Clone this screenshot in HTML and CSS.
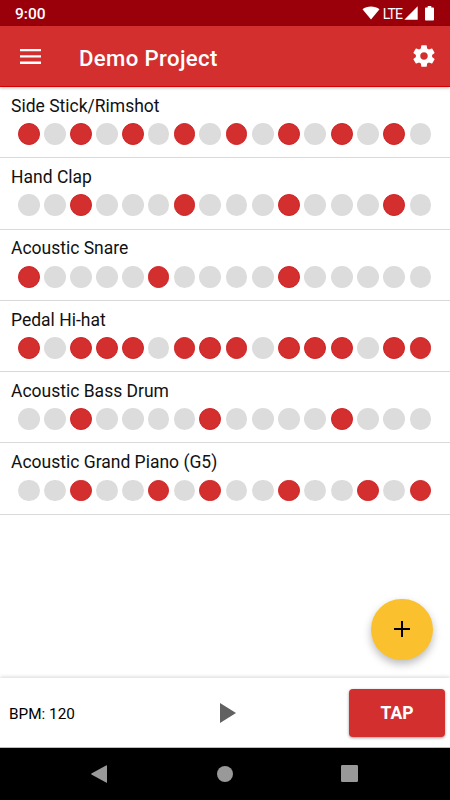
FILE: index.html
```html
<!DOCTYPE html>
<html lang="en">
<head>
<meta charset="utf-8">
<title>Demo Project</title>
<link rel="stylesheet" href="styles.css">
</head>
<body>
<div class="screen">
  <div class="status">
    <span class="time">9:00</span>
    <svg class="wifi" width="18" height="14" viewBox="0 0 18 14"><path d="M9 13.5 0.5 3.3C5 -0.3 13 -0.3 17.5 3.3Z"/></svg>
    <span class="lte">LTE</span>
    <svg class="signal" width="14" height="14" viewBox="0 0 14 14"><path d="M0.3 13.7H13.7V0.3Z"/></svg>
    <svg class="battery" width="9" height="15" viewBox="0 0 9 15"><path d="M2.7 0H6.3V1.6H8.2Q9 1.6 9 2.4V13.7Q9 14.5 8.2 14.5H.8Q0 14.5 0 13.7V2.4Q0 1.6 .8 1.6H2.7Z"/></svg>
  </div>
  <header class="bar">
    <svg class="menu" width="21" height="15" viewBox="0 0 21 15"><path d="M0 0H21V2.3H0ZM0 6.3H21V8.6H0ZM0 12.6H21V14.9H0Z"/></svg>
    <h1>Demo Project</h1>
    <svg class="gear" width="26" height="26" viewBox="0 0 24 24"><path d="M19.43 12.98c.04-.32.07-.64.07-.98s-.03-.66-.07-.98l2.11-1.65c.19-.15.24-.42.12-.64l-2-3.46c-.12-.22-.39-.3-.61-.22l-2.49 1c-.52-.4-1.08-.73-1.69-.98l-.38-2.65C14.46 2.18 14.25 2 14 2h-4c-.25 0-.46.18-.49.42l-.38 2.65c-.61.25-1.17.59-1.69.98l-2.49-1c-.23-.09-.49 0-.61.22l-2 3.46c-.13.22-.07.49.12.64l2.11 1.65c-.04.32-.07.65-.07.98s.03.66.07.98l-2.11 1.65c-.19.15-.24.42-.12.64l2 3.46c.12.22.39.3.61.22l2.49-1c.52.4 1.08.73 1.69.98l.38 2.65c.03.24.24.42.49.42h4c.25 0 .46-.18.49-.42l.38-2.65c.61-.25 1.17-.59 1.69-.98l2.49 1c.23.09.49 0 .61-.22l2-3.46c.12-.22.07-.49-.12-.64zM12 15.5c-1.93 0-3.5-1.57-3.5-3.5s1.57-3.5 3.5-3.5 3.5 1.57 3.5 3.5-1.57 3.5-3.5 3.5z"/></svg>
  </header>
  <main class="tracks">
    <section class="track"><h2>Side Stick/Rimshot</h2><div class="steps"><i class="on"></i><i></i><i class="on"></i><i></i><i class="on"></i><i></i><i class="on"></i><i></i><i class="on"></i><i></i><i class="on"></i><i></i><i class="on"></i><i></i><i class="on"></i><i></i></div></section>
    <section class="track"><h2>Hand Clap</h2><div class="steps"><i></i><i></i><i class="on"></i><i></i><i></i><i></i><i class="on"></i><i></i><i></i><i></i><i class="on"></i><i></i><i></i><i></i><i class="on"></i><i></i></div></section>
    <section class="track"><h2>Acoustic Snare</h2><div class="steps"><i class="on"></i><i></i><i></i><i></i><i></i><i class="on"></i><i></i><i></i><i></i><i></i><i class="on"></i><i></i><i></i><i></i><i></i><i></i></div></section>
    <section class="track"><h2>Pedal Hi-hat</h2><div class="steps"><i class="on"></i><i></i><i class="on"></i><i class="on"></i><i class="on"></i><i></i><i class="on"></i><i class="on"></i><i class="on"></i><i></i><i class="on"></i><i class="on"></i><i class="on"></i><i></i><i class="on"></i><i class="on"></i></div></section>
    <section class="track"><h2>Acoustic Bass Drum</h2><div class="steps"><i></i><i></i><i class="on"></i><i></i><i></i><i></i><i></i><i class="on"></i><i></i><i></i><i></i><i></i><i class="on"></i><i></i><i></i><i></i></div></section>
    <section class="track"><h2>Acoustic Grand Piano (G5)</h2><div class="steps"><i></i><i></i><i class="on"></i><i></i><i></i><i class="on"></i><i></i><i class="on"></i><i></i><i></i><i class="on"></i><i></i><i></i><i class="on"></i><i></i><i class="on"></i></div></section>
    <button class="fab" aria-label="Add track"><svg width="16" height="16" viewBox="0 0 16 16"><path d="M7 0H9V7H16V9H9V16H7V9H0V7H7Z"/></svg></button>
  </main>
  <footer class="transport">
    <span class="bpm">BPM: 120</span>
    <svg class="play" width="16" height="20" viewBox="0 0 16 20"><path d="M0 0 16 10 0 20Z"/></svg>
    <button class="tap">TAP</button>
  </footer>
  <nav class="nav">
    <svg width="16" height="18" viewBox="0 0 16 18"><path d="M16 .5V17.5Q16 18 15.5 17.8L.4 9.5Q0 9 .4 8.5L15.5 .2Q16 0 16 .5Z"/></svg>
    <svg class="home" width="16" height="16" viewBox="0 0 16 16"><circle cx="8" cy="8" r="8"/></svg>
    <svg width="17" height="17" viewBox="0 0 17 17"><rect width="17" height="17" rx="1.2"/></svg>
  </nav>
</div>
</body>
</html>
```
FILE: styles.css
```css
* { box-sizing: border-box; }
body { margin: 0; font-family: Roboto, sans-serif; background: #fff; color: #000; }
h1, h2 { margin: 0; }
svg { display: block; flex: none; }
button { border: 0; padding: 0; font-family: inherit; }
.screen { width: 450px; height: 800px; display: flex; flex-direction: column; overflow: hidden; }

.status { height: 26px; flex: none; background: #99000a; color: #fff; fill: #fff; display: flex; align-items: center; padding: 0 16px 0 15px; }
.time { font-size: 15.5px; font-weight: 500; margin-right: auto; padding-top: 2px; }
.lte { font-size: 14px; margin: 1px 2px 0 3px; letter-spacing: -0.9px; }
.battery { margin-left: 7px; }

.bar { height: 61px; flex: none; background: #d32f2f; border-bottom: 1px solid #d50000; box-shadow: 0 1px 3px rgba(0,0,0,.25); color: #fff; fill: #fff; display: flex; align-items: center; padding: 0 13.5px 0 20px; position: relative; z-index: 1; }
.menu { margin-top: 1px; }
.bar h1 { font-size: 22.2px; font-weight: 500; line-height: 28px; margin-left: 38px; margin-right: auto; letter-spacing: .35px; padding-top: 3px; }

.tracks { flex: 1; min-height: 0; position: relative; }
.track { height: 71.3px; border-bottom: 1px solid #d9d9d9; padding: 8.8px 18px 0 11px; }
.track h2 { font-size: 17.5px; font-weight: 400; line-height: 21px; color: #111; white-space: nowrap; }
.steps { display: grid; grid-template-columns: repeat(7, 25.9px) repeat(9, 26.28px); padding: 6.4px 0 0 7.2px; }
.steps i { width: 21.8px; height: 21.8px; border-radius: 50%; background: #dcdcdc; }
.steps .on { background: #d32f2f; border: 1px solid #d01f22; }

.fab { position: absolute; right: 17.3px; bottom: 18px; width: 61.4px; height: 61.4px; border-radius: 50%; background: #fbc02d; box-shadow: 0 4px 8px rgba(0,0,0,.27); display: flex; align-items: center; justify-content: center; }

.transport { height: 70px; flex: none; background: #fff; border-bottom: 1px solid #bbb; box-shadow: 0 -1px 4px rgba(0,0,0,.16); display: flex; align-items: center; padding: 0 5px 0 9px; position: relative; }
.bpm { width: 211px; font-size: 15.3px; padding-top: 3px; }
.play { fill: #616161; }
.tap { width: 96px; height: 48px; margin-left: auto; border-radius: 4px; background: #d32f2f; box-shadow: 0 1px 3px rgba(0,0,0,.4); color: #fff; font-size: 17.5px; font-weight: 700; padding-top: 1px; }

.nav { height: 52px; flex: none; background: #000; fill: #999; display: flex; align-items: center; justify-content: space-between; padding: 0 92px 1px 91px; }
.home { margin-left: 2px; }
```
